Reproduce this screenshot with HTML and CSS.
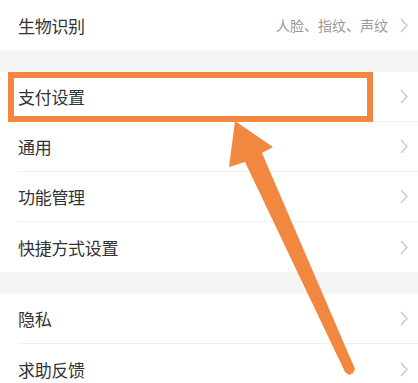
FILE: index.html
```html
<!DOCTYPE html>
<html lang="zh">
<head>
<meta charset="utf-8">
<link rel="stylesheet" href="styles.css">
</head>
<body>
<div class="page">
  <div class="group">
    <div class="row"><div class="row-inner"><span class="label">生物识别</span><span class="value">人脸、指纹、声纹</span><svg class="chev" viewBox="0 0 8 15"><path d="M1 1 L7 7.5 L1 14" /></svg></div></div>
  </div>
  <div class="band"></div>
  <div class="group">
    <div class="row"><div class="row-inner"><span class="label">支付设置</span><svg class="chev" viewBox="0 0 8 15"><path d="M1 1 L7 7.5 L1 14" /></svg></div></div>
    <div class="row"><div class="row-inner"><span class="label">通用</span><svg class="chev" viewBox="0 0 8 15"><path d="M1 1 L7 7.5 L1 14" /></svg></div></div>
    <div class="row"><div class="row-inner"><span class="label">功能管理</span><svg class="chev" viewBox="0 0 8 15"><path d="M1 1 L7 7.5 L1 14" /></svg></div></div>
    <div class="row"><div class="row-inner"><span class="label">快捷方式设置</span><svg class="chev" viewBox="0 0 8 15"><path d="M1 1 L7 7.5 L1 14" /></svg></div></div>
  </div>
  <div class="band"></div>
  <div class="group">
    <div class="row"><div class="row-inner"><span class="label">隐私</span><svg class="chev" viewBox="0 0 8 15"><path d="M1 1 L7 7.5 L1 14" /></svg></div></div>
    <div class="row"><div class="row-inner"><span class="label">求助反馈</span><svg class="chev" viewBox="0 0 8 15"><path d="M1 1 L7 7.5 L1 14" /></svg></div></div>
  </div>

  <div class="highlight"></div>
  <svg class="arrow" viewBox="0 0 418 383" width="418" height="383">
    <polygon points="235,121 273,147 262,153 355,369 353,373 349,375 345,372 245,162 229,167" />
  </svg>
</div>
</body>
</html>
```

FILE: styles.css
```css
html, body {
  margin: 0;
  padding: 0;
  background: #ffffff;
}
.page {
  position: relative;
  width: 418px;
  height: 383px;
  overflow: hidden;
  font-family: "Noto Sans CJK SC", "Noto Sans", sans-serif;
}
.group {
  display: flex;
  flex-direction: column;
  background: #ffffff;
}
.band {
  height: 22px;
  background: #f5f5f5;
}
.row {
  height: 50px;
  padding-left: 18px;
}
.row-inner {
  height: 100%;
  box-sizing: border-box;
  display: flex;
  align-items: center;
  padding-right: 10px;
  border-bottom: 1px solid #efefef;
}
.row:last-child .row-inner {
  border-bottom: none;
}
.label {
  flex: 1;
  font-size: 17px;
  color: #333333;
  letter-spacing: -0.3px;
}
.value {
  font-size: 14px;
  color: #9a9a9a;
  margin-right: 12px;
}
.chev {
  width: 8px;
  height: 15px;
  fill: none;
  stroke: #c8c8c8;
  stroke-width: 1.3;
}
.highlight {
  position: absolute;
  left: 8px;
  top: 72px;
  width: 365px;
  height: 50px;
  box-sizing: border-box;
  border: 6px solid #f2883f;
}
.arrow {
  position: absolute;
  left: 0;
  top: 0;
}
.arrow polygon {
  fill: #f2883f;
}
```
